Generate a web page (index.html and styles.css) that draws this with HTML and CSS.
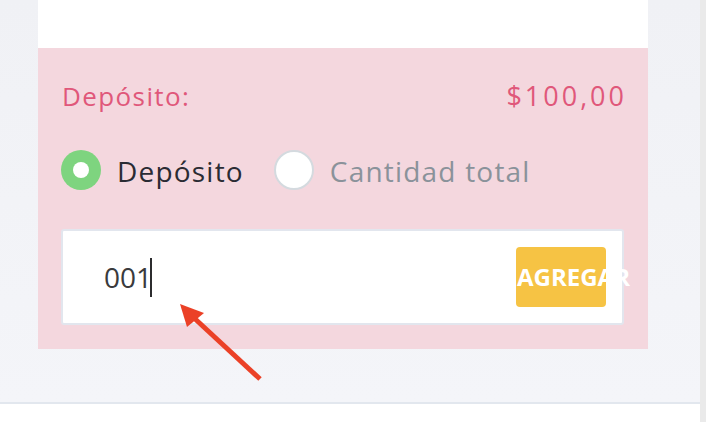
FILE: index.html
```html
<!DOCTYPE html>
<html lang="es">
<head>
  <meta charset="UTF-8">
  <meta name="viewport" content="width=device-width, initial-scale=1.0">
  <title>Depósito</title>
  <link rel="stylesheet" href="styles.css">
</head>
<body>

<div class="page">
  <main class="screen">
    <div class="stage">
      <div class="card">
        <div class="card-top"></div>

        <!-- Bloque de depósito -->
        <section class="deposit">
          <div class="deposit-head">
            <span>Depósito:</span>
            <span class="amount">$100,00</span>
          </div>

          <div class="options">
            <label class="option option-on"><span class="radio"></span><span class="option-text">Depósito</span></label>
            <label class="option"><span class="radio"></span><span class="option-text">Cantidad total</span></label>
          </div>

          <div class="code-field">
            <span class="code-value">001</span><span class="caret"></span>
            <div class="add-btn"><span>AGREGAR</span></div>
          </div>
        </section>
      </div>
    </div>
    <div class="footer"></div>
  </main>
  <div class="scrollbar"></div>
</div>

<!-- Flecha de anotación -->
<svg class="pointer" width="706" height="422" viewBox="0 0 706 422">
  <line x1="260" y1="379" x2="193" y2="317" stroke="#eb4127" stroke-width="5"/>
  <polygon points="180,304 204,313 187,327" fill="#eb4127"/>
</svg>

</body>
</html>
```

FILE: styles.css
```css
/* General */
body {
  margin: 0;
  padding: 0;
  font-family: 'Open Sans', 'Liberation Sans', sans-serif;
  background-color: #ffffff;
}

.page {
  display: flex;
  width: 706px;
  height: 422px;
  overflow: hidden;
}

.screen {
  width: 700px;
  display: flex;
  flex-direction: column;
}

.stage {
  height: 402px;
  background: linear-gradient(#f0f1f5, #f4f5f9);
}

.footer {
  flex: 1;
  border-top: 2px solid #e2e7ee;
  background-color: #ffffff;
}

.scrollbar {
  width: 6px;
  background-color: #eaeaea;
}

/* Tarjeta */
.card {
  margin-left: 38px;
  width: 610px;
}

.card-top {
  height: 48px;
  background-color: #ffffff;
}

.deposit {
  height: 301px;
  box-sizing: border-box;
  padding: 32px 24px 0 23px;
  background-color: #f4d7de;
}

.deposit-head {
  display: flex;
  justify-content: space-between;
  font-size: 26px;
  font-weight: 500;
  line-height: 32px;
  color: #e0577a;
  letter-spacing: 1.4px;
  padding-left: 1px;
}

.amount {
  font-size: 27px;
  letter-spacing: 3px;
  margin-right: -3px;
}

/* Opciones */
.options {
  display: flex;
  gap: 30px;
  margin-top: 38px;
  height: 40px;
}

.option {
  display: flex;
  align-items: center;
  gap: 16px;
  font-size: 28px;
  font-weight: 500;
  color: #8a929a;
  letter-spacing: 1.2px;
}

.option-on {
  color: #2a2b33;
}

.option-text {
  line-height: 40px;
  padding-top: 2px;
}

.radio {
  width: 40px;
  height: 40px;
  box-sizing: border-box;
  border-radius: 50%;
  border: 2px solid #d4dadf;
  background-color: #ffffff;
}

.option-on .radio {
  border: none;
  background-color: #7ed47f;
  display: flex;
  align-items: center;
  justify-content: center;
}

.option-on .radio::after {
  content: "";
  width: 16px;
  height: 16px;
  border-radius: 50%;
  background-color: #ffffff;
}

/* Campo de código */
.code-field {
  margin-top: 39px;
  height: 96px;
  box-sizing: border-box;
  border: 2px solid #e2e6ee;
  border-radius: 3px;
  background-color: #ffffff;
  display: flex;
  align-items: center;
  padding: 0 16px 0 41px;
}

.code-value {
  font-size: 28px;
  font-weight: 500;
  color: #3a3a3c;
}

.caret {
  width: 2px;
  height: 39px;
  margin-left: -2px;
  background-color: #2c2c2e;
}

.add-btn {
  margin-left: auto;
  width: 90px;
  height: 60px;
  border-radius: 4px;
  background-color: #f6c344;
  color: #ffffff;
  font-size: 24px;
  font-weight: 700;
  line-height: 60px;
  white-space: nowrap;
  padding-left: 1px;
  box-sizing: border-box;
}

/* Flecha */
.pointer {
  position: absolute;
  top: 0;
  left: 0;
  pointer-events: none;
}
```
